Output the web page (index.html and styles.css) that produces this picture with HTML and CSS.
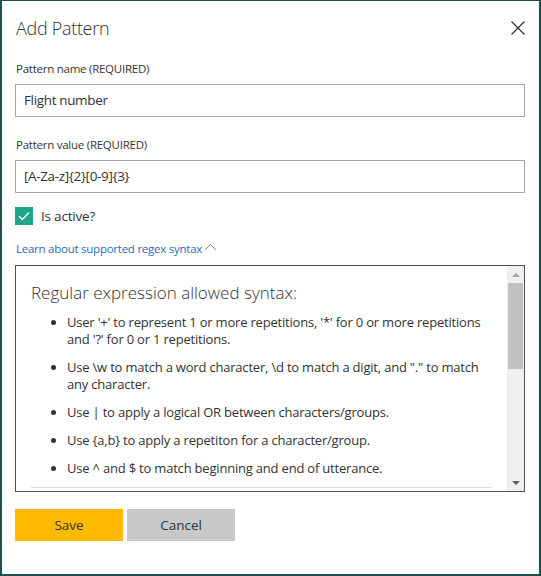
FILE: index.html
```html
<!DOCTYPE html>
<html>
<head>
<meta charset="utf-8">
<link rel="stylesheet" href="styles.css">
</head>
<body>
<div class="dialog">
  <div class="header">
    <h1 class="title">Add Pattern</h1>
    <button class="close" aria-label="Close">
      <svg width="16" height="16" viewBox="0 0 16 16"><path d="M1.5 1.5 L14.5 14.5 M14.5 1.5 L1.5 14.5" stroke="#333" stroke-width="1.3" fill="none"/></svg>
    </button>
  </div>

  <label class="label label-first">Pattern name (REQUIRED)</label>
  <div class="input">Flight number</div>

  <label class="label label-second">Pattern value (REQUIRED)</label>
  <div class="input">[A-Za-z]{2}[0-9]{3}</div>

  <div class="check-row">
    <span class="checkbox">
      <svg width="18" height="18" viewBox="0 0 18 18"><path d="M4 9.2 L7.4 12.5 L14 5.5" stroke="#fff" stroke-width="1.3" fill="none"/></svg>
    </span>
    <span class="check-label">Is active?</span>
  </div>

  <div class="link-row">
    <a class="link">Learn about supported regex syntax</a>
    <svg class="chev" width="13" height="9" viewBox="0 0 13 9"><path d="M1 7 L6.5 1.5 L12 7" stroke="#8a8a8a" stroke-width="1" fill="none"/></svg>
  </div>

  <div class="syntax-box">
    <div class="syntax-content">
      <h2 class="syntax-title">Regular expression allowed syntax:</h2>
      <ul class="syntax-list">
        <li>User '+' to represent 1 or more repetitions, '*' for 0 or more repetitions and '?' for 0 or 1 repetitions.</li>
        <li>Use \w to match a word character, \d to match a digit, and "." to match any character.</li>
        <li>Use | to apply a logical OR between characters/groups.</li>
        <li>Use {a,b} to apply a repetiton for a character/group.</li>
        <li>Use ^ and $ to match beginning and end of utterance.</li>
      </ul>
      <div class="syntax-rule"></div>
    </div>
    <div class="scrollbar">
      <div class="arrow arrow-up"></div>
      <div class="track"><div class="thumb"></div></div>
      <div class="arrow arrow-down"></div>
    </div>
  </div>

  <div class="actions">
    <button class="btn btn-save">Save</button>
    <button class="btn btn-cancel">Cancel</button>
  </div>
</div>
</body>
</html>
```

FILE: styles.css
```css
* { box-sizing: border-box; }
html, body { margin: 0; padding: 0; background: #ffffff; }
body {
  font-family: "Open Sans", "Noto Sans", sans-serif;
  color: #333333;
}
.dialog {
  width: 541px;
  height: 576px;
  border: 2px solid #1e4d4d;
  border-top-width: 1px;
  padding: 13px 14px 0 13px;
  background: #ffffff;
}
.header {
  display: flex;
  justify-content: space-between;
  align-items: center;
  height: 28px;
}
.title {
  margin: 0 0 0 1px;
  font-size: 18px;
  font-weight: 300;
  letter-spacing: -0.3px;
  line-height: 28px;
  color: #333;
}
.close {
  border: 0;
  background: transparent;
  padding: 0;
  width: 16px;
  height: 16px;
  margin-right: -1px;
  display: flex;
}
.label {
  display: block;
  font-size: 11.5px;
  letter-spacing: -0.25px;
  line-height: 16px;
  margin-left: 1px;
  color: #333;
}
.label-first { margin-top: 19px; }
.label-second { margin-top: 20px; }
.input {
  margin-top: 7px;
  height: 33px;
  border: 1px solid #a6a6a6;
  padding: 0 8px;
  font-size: 13.5px;
  letter-spacing: -0.35px;
  line-height: 31px;
  color: #333;
}
.check-row {
  margin-top: 14px;
  display: flex;
  align-items: center;
  height: 18px;
  gap: 8px;
}
.checkbox {
  width: 18px;
  height: 18px;
  background: #1ea58a;
  display: flex;
}
.check-label {
  font-size: 13.5px;
  letter-spacing: -0.2px;
  line-height: 18px;
}
.link-row {
  margin-top: 16px;
  display: flex;
  align-items: center;
  height: 16px;
  margin-left: 1px;
}
.link {
  font-size: 11.5px;
  letter-spacing: -0.25px;
  color: #2b6cbd;
  line-height: 16px;
}
.chev { margin-left: 2px; margin-top: -3px; }
.syntax-box {
  margin-top: 8px;
  height: 227px;
  border: 1px solid #4f4f4f;
  display: flex;
  overflow: hidden;
}
.syntax-content {
  flex: 1;
  padding: 15px 15px 0 15px;
  overflow: hidden;
  display: flex;
  flex-direction: column;
}
.syntax-title {
  margin: 0;
  font-size: 17px;
  font-weight: 300;
  line-height: 24px;
  color: #333;
}
.syntax-list {
  margin: 9px 0 0 0;
  padding-left: 36px;
  font-size: 13px;
  letter-spacing: -0.2px;
  line-height: 17px;
}
.syntax-list li { margin-bottom: 11px; }
.syntax-list li:last-child { margin-bottom: 0; }
.syntax-rule {
  margin-top: auto;
  margin-bottom: 3px;
  border-top: 1px solid #dcdcdc;
}
.scrollbar {
  width: 17px;
  background: #f0f0f0;
  display: flex;
  flex-direction: column;
}
.arrow {
  height: 17px;
  position: relative;
}
.arrow-up::after, .arrow-down::after {
  content: "";
  position: absolute;
  left: 5px;
  border-left: 4px solid transparent;
  border-right: 4px solid transparent;
}
.arrow-up::after { top: 7px; border-bottom: 4px solid #a3a3a3; }
.arrow-down::after { top: 7px; border-top: 4px solid #606060; }
.track { flex: 1; padding: 0 1px; }
.thumb {
  height: 86px;
  background: #c1c1c1;
}
.actions {
  margin-top: 17px;
  display: flex;
  gap: 4px;
}
.btn {
  width: 108px;
  height: 32px;
  border: 0;
  font-family: inherit;
  font-size: 13.5px;
  color: #333;
}
.btn-save { background: #ffb900; }
.btn-cancel { background: #c8c8c8; }
```
